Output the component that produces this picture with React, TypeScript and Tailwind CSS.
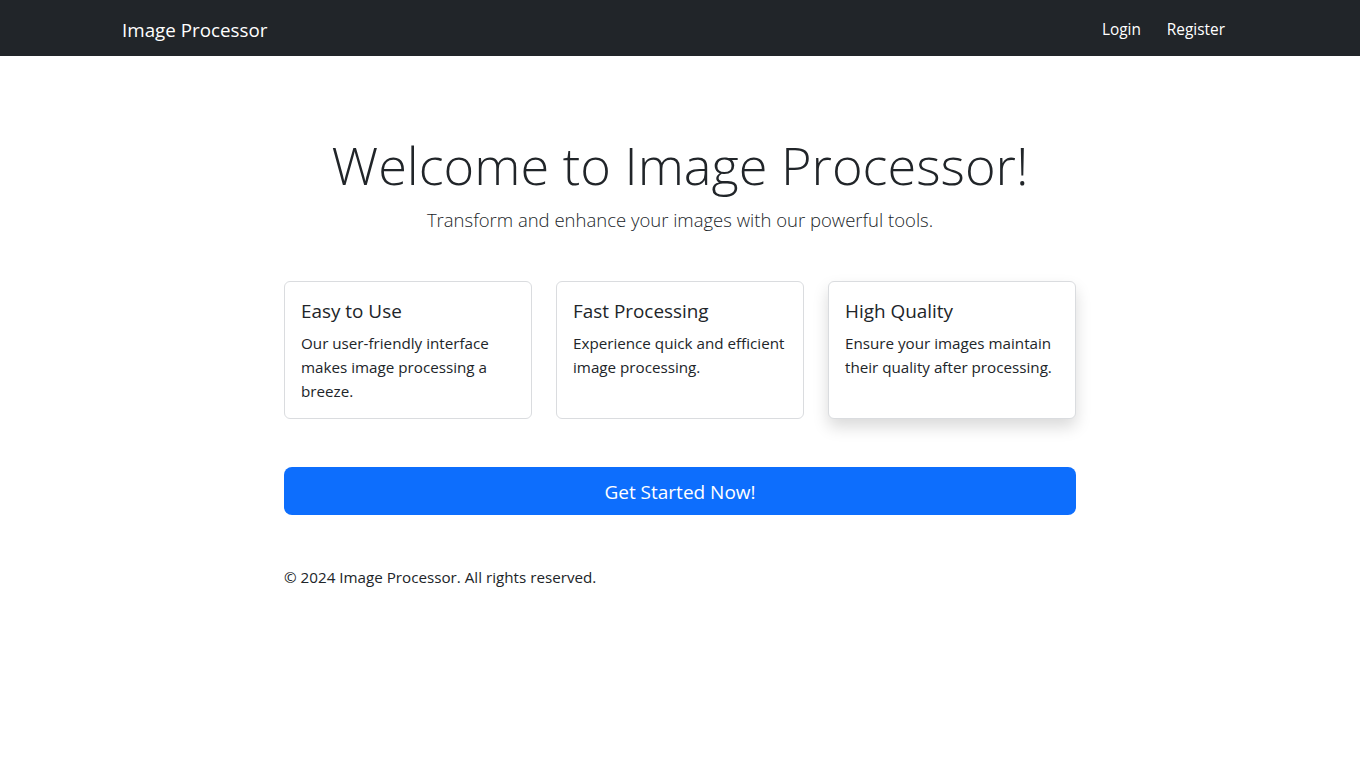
export default function App() {
  const cards = [
    { title: "Easy to Use", text: "Our user-friendly interface makes image processing a breeze." },
    { title: "Fast Processing", text: "Experience quick and efficient image processing." },
    { title: "High Quality", text: "Ensure your images maintain their quality after processing." },
  ];
  return (
    <div className="min-h-[768px] bg-white text-[#212529]" style={{ fontFamily: '"Open Sans", "Noto Sans", sans-serif' }}>
      <nav className="h-[56px] bg-[#212529]">
        <div className="mx-auto flex h-full max-w-[1140px] items-center justify-between px-3 pt-1">
          <span className="text-[18.8px] leading-[30px] text-white">Image Processor</span>
          <div className="flex items-center gap-[10px] pr-[5px]">
            <a className="px-2 text-[15.4px] text-white">Login</a>
            <a className="px-2 text-[15.4px] text-white">Register</a>
          </div>
        </div>
      </nav>
      <main className="mx-auto max-w-[816px] px-3 pt-[75px]">
        <h1 className="text-center text-[52.3px] font-light leading-[67px]">Welcome to Image Processor!</h1>
        <p className="mt-[7px] text-center text-[18.5px] font-light leading-[30px]">Transform and enhance your images with our powerful tools.</p>
        <div className="mt-[46px] grid grid-cols-3 gap-6">
          {cards.map((c, i) => (
            <div
              key={c.title}
              className={
                "rounded-[6px] border border-[#dadcdf] bg-white p-4 " +
                (i === 2 ? "shadow-[0_8px_16px_rgba(0,0,0,0.15)]" : "")
              }
            >
              <h5 className="mb-2 pt-[1px] text-[18.9px] leading-[24px]">{c.title}</h5>
              <p className="-mb-[1px] text-[15.2px] leading-[24px]">{c.text}</p>
            </div>
          ))}
        </div>
        <button className="mt-12 h-[48px] w-full rounded-[8px] bg-[#0d6efd] pt-[2px] text-[19px] text-white">Get Started Now!</button>
        <footer className="mt-[50px] text-[15.2px] leading-[24px]">© 2024 Image Processor. All rights reserved.</footer>
      </main>
    </div>
  );
}
